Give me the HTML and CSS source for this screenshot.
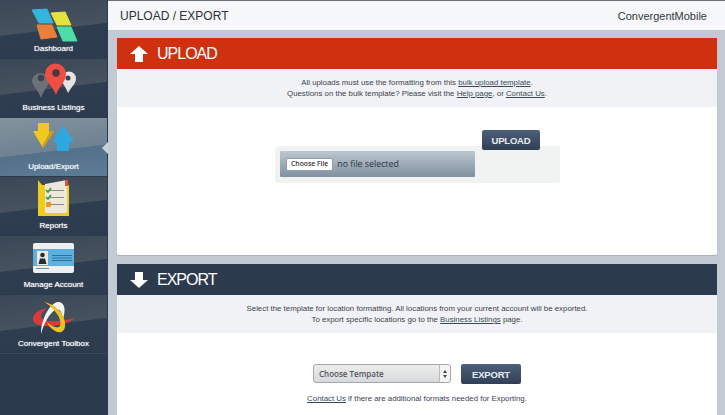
FILE: index.html

```html
<!DOCTYPE html>
<html>
<head>
<meta charset="utf-8">
<title>Upload / Export</title>
<link rel="stylesheet" href="styles.css">
</head>
<body>
<div class="app">
  <div class="sidebar">
    <a class="nav-item">
      <svg class="nav-icon" viewBox="0 0 107 43">
        <polygon points="32,10 47,9 53,23 39,23" fill="#35b4dc" stroke="#35b4dc" stroke-linejoin="round"/>
        <polygon points="51,13 65,12 71,25 57,25" fill="#e6e23c" stroke="#e6e23c" stroke-linejoin="round"/>
        <polygon points="37,25 52,25 57,37 41,39" fill="#e8803a" stroke="#e8803a" stroke-linejoin="round"/>
        <polygon points="57,27 71,27 77,41 63,41" fill="#4fdca6" stroke="#4fdca6" stroke-linejoin="round"/>
      </svg>
      <span class="nav-label">Dashboard</span>
    </a>
    <a class="nav-item">
      <svg class="nav-icon" viewBox="0 0 107 43">
        <path d="M41 39 C38 30 32 27 32 21 A8.700 8.700 0 0 1 49 21 C49 27 44 30 41 39Z" fill="#6d7278"/>
        <circle cx="41" cy="19" r="3.200" fill="#3a4450"/>
        <path d="M68 34 C66 28 62 25 62 19.500 A6.800 6.800 0 0 1 76 19.500 C76 25 71 28 68 34Z" fill="#e4e4e4"/>
        <circle cx="68" cy="19" r="2.500" fill="#3a4450"/>
        <path d="M56 36 C53 27 45 23 45 15 A10.500 10.500 0 0 1 66 15 C66 23 59 27 56 36Z" fill="#ee4f42"/>
        <circle cx="56" cy="14" r="3.800" fill="#4a3a40"/>
      </svg>
      <span class="nav-label">Business Listings</span>
    </a>
    <a class="nav-item active">
      <svg class="nav-icon" viewBox="0 0 107 43">
        <polygon points="38,5 49,5 49,13 54,13 43,30 33,13 38,13" fill="#f2c81e"/>
        <polygon points="43,30 54,13 49,13 49,16 42,28" fill="#c9a018"/>
        <polygon points="63,7 74,24 69,24 69,33 57,33 57,24 53,24" fill="#2ea8e0"/>
      </svg>
      <span class="nav-label">Upload/Export</span>
    </a>
    <a class="nav-item">
      <svg class="nav-icon" viewBox="0 0 107 43">
        <path d="M38 3 L42 8 L69 8 L69 39 L38 39Z" fill="#f0cc1c"/>
        <polygon points="45,7 67,3 67,36 45,36" fill="#ece8dc"/>
        <rect x="50" y="13" width="14" height="1" fill="#8a8a80"/>
        <rect x="50" y="20" width="14" height="1" fill="#8a8a80"/>
        <rect x="50" y="27" width="14" height="1" fill="#8a8a80"/>
        <path d="M46 13 L48 15 L51 11" fill="none" stroke="#2e9a35" stroke-width="1.500"/>
        <path d="M46 20 L48 22 L51 18" fill="none" stroke="#2e9a35" stroke-width="1.500"/>
        <rect x="46" y="25" width="5" height="5" fill="#ee9a22"/>
        <rect x="65" y="3" width="3" height="6" fill="#e0503a"/>
      </svg>
      <span class="nav-label">Reports</span>
    </a>
    <a class="nav-item">
      <svg class="nav-icon" viewBox="0 0 107 43">
        <rect x="33" y="7" width="41" height="30" rx="2" fill="#eceef0"/>
        <rect x="33" y="13" width="41" height="17" fill="#5cb0de"/>
        <rect x="37" y="15" width="11" height="14" fill="#e8e8e4"/>
        <circle cx="42.500" cy="19" r="2.300" fill="#2c2c2c"/>
        <path d="M38.500 28 L40 22.500 L45 22.500 L46.500 28Z" fill="#2c2c2c"/>
        <rect x="52" y="19" width="20" height="1" fill="#2f6f9a"/>
        <rect x="52" y="21.500" width="20" height="1" fill="#2f6f9a"/>
        <rect x="52" y="24" width="20" height="1" fill="#2f6f9a"/>
        <rect x="36" y="32" width="13" height="1" fill="#8a8a8a"/>
      </svg>
      <span class="nav-label">Manage Account</span>
    </a>
    <a class="nav-item last">
      <svg class="nav-icon" viewBox="0 0 107 43">
        <path d="M47 13 C37 15 33 20 33 24 C33 28 38 31 46 31 C58 32 68 29 76 22 C68 26 58 27 48 26 C40 25 38 20 47 13Z" fill="#d93a3a"/>
        <path d="M41 39 C41 24 50 8 58 7 C65 7 66 15 63 24 C62 16 59 13 55 15 C49 19 44 28 41 39Z" fill="#f4f4f4"/>
        <path d="M44 7 C54 9 64 17 65 28 C66 37 60 39 55 36 C50 33 48 30 47 27 C51 31 57 34 60 31 C63 25 54 12 44 7Z" fill="#eec21e"/>
      </svg>
      <span class="nav-label">Convergent Toolbox</span>
    </a>
  </div>
  <div class="main">
    <div class="topbar">
      <div class="page-title">UPLOAD / EXPORT</div>
      <div class="account">ConvergentMobile</div>
    </div>
    <div class="panel upload-panel">
      <div class="panel-head red">
        <svg class="head-arrow" viewBox="0 0 18 16"><polygon points="9,0 18,8 13,8 13,16 5,16 5,8 0,8" fill="#fff"/></svg>
        <span>UPLOAD</span>
      </div>
      <div class="panel-note">
        All uploads must use the formatting from this <a>bulk upload template</a>.<br>
        Questions on the bulk template? Please visit the <a>Help page</a>, or <a>Contact Us</a>.
      </div>
      <div class="upload-body">
        <div class="upload-box">
          <button class="action upload-btn">UPLOAD</button>
          <div class="file-field">
            <span class="file-btn">Choose File</span>
            <span class="file-text">no file selected</span>
          </div>
        </div>
      </div>
    </div>
    <div class="panel export-panel">
      <div class="panel-head navy">
        <svg class="head-arrow" viewBox="0 0 18 16"><polygon points="9,16 18,8 13,8 13,0 5,0 5,8 0,8" fill="#fff"/></svg>
        <span>EXPORT</span>
      </div>
      <div class="panel-note">
        Select the template for location formatting. All locations from your current account will be exported.<br>
        To export specific locations go to the <a>Business Listings</a> page.
      </div>
      <div class="export-body">
        <div class="export-row">
          <div class="fake-select">
            <span>Choose Tempate</span>
            <span class="select-arrows">
              <svg viewBox="0 0 6 10" width="6" height="10"><polygon points="3,1 5,4 1,4" fill="#444"/><polygon points="3,9 5,6 1,6" fill="#444"/></svg>
            </span>
          </div>
          <button class="action">EXPORT</button>
        </div>
        <div class="export-foot"><a>Contact Us</a> if there are additional formats needed for Exporting.</div>
      </div>
    </div>
  </div>
</div>
</body>
</html>
```

FILE: styles.css

```css
html, body {
  margin: 0;
  padding: 0;
  height: 100%;
  overflow: hidden;
}

body {
  font-family: "Liberation Sans", Arial, sans-serif;
  background: #c2cad3;
  color: #3c4450;
}

.app {
  display: flex;
  height: 415px;
}

.sidebar {
  width: 108px;
  flex: none;
  background: #2c3a4e;
}

.nav-item {
  display: block;
  position: relative;
  height: 58px;
  margin-bottom: 1px;
  margin-right: 1px;
  box-sizing: border-box;
  background: linear-gradient(173deg, #3a4757 0%, #46525e 50%, #2f3d50 51%, #2d3b4e 100%);
  text-align: center;
  overflow: hidden;
}

.nav-item.last {
  border-bottom: 1px solid #3b4858;
  height: 59px;
}

.nav-item.active {
  overflow: visible;
  background: linear-gradient(173deg, #83929e 0%, #6f8292 55%, #54708a 56%, #5d7d96 100%);
}

.nav-item.active::after {
  content: "";
  position: absolute;
  right: -1px;
  top: 24px;
  border: 6px solid transparent;
  border-right: 6px solid #c9d0d7;
  border-left: 0;
}

.nav-icon {
  display: block;
  width: 107px;
  height: 43px;
}

.nav-label {
  display: block;
  font-size: 8px;
  line-height: 11px;
  color: #f6f8fa;
  text-shadow: 0 0 1px #dfe4ea;
}

.main {
  flex: 1;
  min-width: 0;
  display: flex;
  flex-direction: column;
}

.topbar {
  display: flex;
  flex: none;
  justify-content: space-between;
  align-items: center;
  height: 29px;
  padding: 0 18px 0 12px;
  background: #f6f7f9;
  border-top: 1px solid #6c7178;
  margin-bottom: 8px;
}

.page-title {
  font-size: 12px;
  color: #2c3038;
}

.account {
  font-size: 11px;
  color: #33373d;
}

.panel {
  flex: none;
  margin: 0 8px 0 9px;
  background: #fff;
  border-radius: 2px;
}

.upload-panel {
  height: 217px;
  margin-bottom: 9px;
  box-shadow: 0 1px 1px #a7adb5;
}

.export-panel {
  flex: 1;
  border-radius: 2px 2px 0 0;
}

.panel-head {
  display: flex;
  align-items: center;
  height: 31px;
  padding-left: 13px;
  color: #fff;
  font-size: 16px;
  letter-spacing: -1px;
}

.panel-head.red {
  background: #cf300f;
}

.panel-head.navy {
  background: #2c3a4e;
}

.head-arrow {
  width: 18px;
  height: 16px;
  margin-right: 9px;
}

.panel-note {
  height: 38px;
  padding-top: 8px;
  box-sizing: border-box;
  background: #f0f2f5;
  text-align: center;
  font-size: 7.850px;
  line-height: 11px;
  color: #3c434d;
}

.panel-note a,
.export-foot a {
  text-decoration: underline;
  color: #3a4a5c;
}

.upload-body {
  padding-top: 39px;
  padding-left: 158px;
}

.upload-box {
  position: relative;
  width: 285px;
  height: 37px;
  box-sizing: border-box;
  padding: 5px;
  background: #f1f2f2;
  border-radius: 3px;
}

.action {
  display: block;
  height: 20px;
  width: 60px;
  padding: 0;
  border: 0;
  border-radius: 2px;
  background: linear-gradient(#4d5f7a, #313f56);
  color: #e8ecf2;
  font-family: "Liberation Sans", Arial, sans-serif;
  font-size: 9.500px;
  font-weight: bold;
  letter-spacing: -0.2px;
}

.upload-btn {
  position: absolute;
  left: 207px;
  top: -16px;
  width: 58px;
}

.file-field {
  display: flex;
  align-items: center;
  width: 195px;
  height: 26px;
  padding-left: 6px;
  box-sizing: border-box;
  background: linear-gradient(#bcc8d0, #7f909f);
  border-radius: 1px;
}

.file-btn {
  height: 11px;
  padding: 0 4px;
  background: #fff;
  border: 1px solid #99a;
  border-radius: 2px;
  font-family: "Open Sans", sans-serif;
  font-size: 6.800px;
  line-height: 10px;
  font-weight: 600;
  color: #333;
}

.file-text {
  margin-left: 4px;
  font-family: "Open Sans", sans-serif;
  font-size: 8.800px;
  color: #2b3440;
}

.export-body {
  padding-top: 31px;
}

.export-row {
  display: flex;
  justify-content: center;
  gap: 10px;
}

.fake-select {
  display: flex;
  align-items: center;
  justify-content: space-between;
  width: 138px;
  height: 19px;
  box-sizing: border-box;
  padding-left: 5px;
  border: 1px solid #a4a8ac;
  border-radius: 3px;
  background: linear-gradient(#eceded, #d8d9da);
  font-family: "Open Sans", sans-serif;
  font-size: 8px;
  font-weight: 600;
  color: #50565e;
}

.select-arrows {
  display: flex;
  align-items: center;
  justify-content: center;
  width: 10px;
  height: 17px;
  border-left: 1px solid #bbb;
  background: #f4f4f4;
  border-radius: 0 3px 3px 0;
}

.export-foot {
  margin-top: 10px;
  text-align: center;
  font-size: 7.850px;
  color: #3c4450;
}
```
